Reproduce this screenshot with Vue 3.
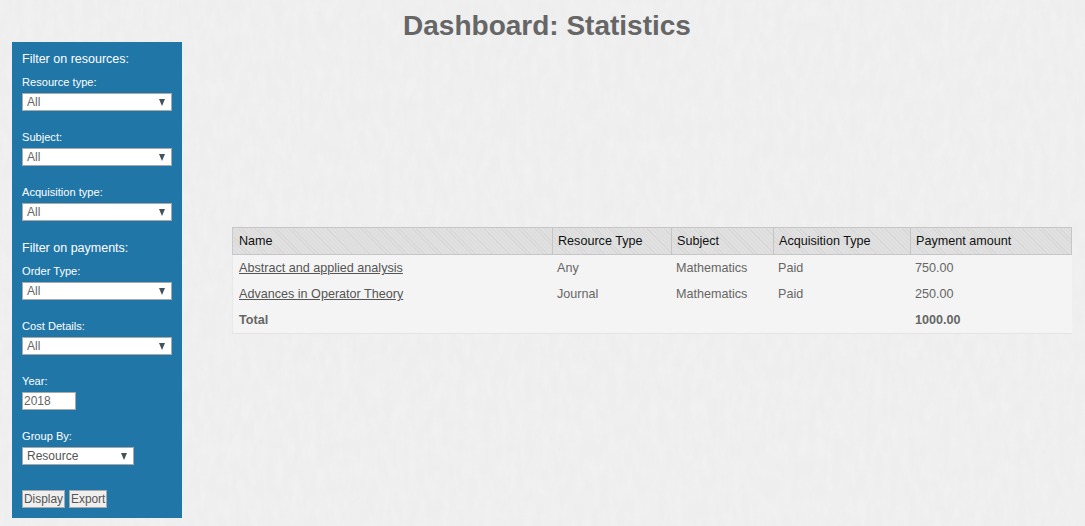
<script setup>
const resourceFilters = [
  { label: 'Resource type:', value: 'All' },
  { label: 'Subject:', value: 'All' },
  { label: 'Acquisition type:', value: 'All' },
]
const paymentFilters = [
  { label: 'Order Type:', value: 'All' },
  { label: 'Cost Details:', value: 'All' },
]
const columns = ['Name', 'Resource Type', 'Subject', 'Acquisition Type', 'Payment amount']
const rows = [
  { name: 'Abstract and applied analysis', type: 'Any', subject: 'Mathematics', acq: 'Paid', amount: '750.00' },
  { name: 'Advances in Operator Theory', type: 'Journal', subject: 'Mathematics', acq: 'Paid', amount: '250.00' },
]
</script>

<template>
  <div class="page">
    <svg class="texture" width="1085" height="526" aria-hidden="true">
      <filter id="paper" x="0" y="0" width="100%" height="100%">
        <feTurbulence type="fractalNoise" baseFrequency="0.12 0.05" numOctaves="4" seed="4" />
        <feColorMatrix type="matrix" values="0 0 0 0 1  0 0 0 0 1  0 0 0 0 1  0.9 0 0 0 -0.3" />
      </filter>
      <rect width="1085" height="526" filter="url(#paper)" opacity="0.4" />
    </svg>
    <h1 class="title">Dashboard: Statistics</h1>
    <div class="content">
      <aside class="sidebar">
        <h2 class="group-title">Filter on resources:</h2>
        <div v-for="f in resourceFilters" :key="f.label" class="field">
          <label>{{ f.label }}</label>
          <div class="select wide"><span>{{ f.value }}</span></div>
        </div>
        <h2 class="group-title">Filter on payments:</h2>
        <div v-for="f in paymentFilters" :key="f.label" class="field">
          <label>{{ f.label }}</label>
          <div class="select wide"><span>{{ f.value }}</span></div>
        </div>
        <div class="field">
          <label>Year:</label>
          <input class="year" value="2018" />
        </div>
        <div class="field">
          <label>Group By:</label>
          <div class="select group"><span>Resource</span></div>
        </div>
        <div class="buttons">
          <button>Display</button>
          <button>Export</button>
        </div>
      </aside>
      <main class="main">
        <table class="stats">
          <colgroup>
            <col style="width: 320px" />
            <col style="width: 119px" />
            <col style="width: 102px" />
            <col style="width: 137px" />
            <col style="width: 161px" />
          </colgroup>
          <thead>
            <tr><th v-for="c in columns" :key="c">{{ c }}</th></tr>
          </thead>
          <tbody>
            <tr v-for="r in rows" :key="r.name">
              <td class="name"><a href="#" @click.prevent>{{ r.name }}</a></td>
              <td>{{ r.type }}</td>
              <td>{{ r.subject }}</td>
              <td>{{ r.acq }}</td>
              <td>{{ r.amount }}</td>
            </tr>
            <tr class="total">
              <td class="name">Total</td>
              <td></td>
              <td></td>
              <td></td>
              <td>1000.00</td>
            </tr>
          </tbody>
        </table>
      </main>
    </div>
  </div>
</template>

<style>
html, body { margin: 0; background: #f0f0f0; }
</style>

<style scoped>
.page {
  position: relative;
  width: 1085px;
  height: 526px;
  overflow: hidden;
  background: #eeeeee;
  font-family: "Liberation Sans", Arial, sans-serif;
  color: #666;
}
.texture { position: absolute; left: 0; top: 0; }
.title {
  position: relative;
  margin: 0;
  height: 42px;
  padding-left: 9px;
  text-align: center;
  font-size: 28px;
  line-height: 51px;
  font-weight: bold;
  color: #666;
  box-sizing: border-box;
}
.content {
  position: relative;
  display: flex;
  align-items: flex-start;
  padding-left: 12px;
}
.sidebar {
  box-sizing: border-box;
  width: 170px;
  height: 476px;
  padding: 8px 10px 0;
  background: #2176a8;
  color: #fff;
}
.group-title {
  margin: 0 0 6px;
  font-size: 12.5px;
  line-height: 18px;
  font-weight: normal;
}
.field { margin-bottom: 18px; }
.field label {
  display: block;
  font-size: 11.1px;
  line-height: 15px;
  height: 19px;
  padding-top: 1px;
  box-sizing: border-box;
}
.select {
  position: relative;
  box-sizing: border-box;
  height: 18px;
  background: #fff;
  border: 1px solid #a9a9a9;
  color: #666;
  font-size: 12px;
  line-height: 16px;
  padding-left: 4px;
}
.select.wide { width: 150px; }
.select.group { width: 112px; padding-left: 4px; color: #555; }
.select::after {
  content: "";
  position: absolute;
  right: 6px;
  top: 5px;
  border-left: 3.5px solid transparent;
  border-right: 3.5px solid transparent;
  border-top: 7px solid #44525a;
}
.year {
  display: block;
  box-sizing: border-box;
  width: 54px;
  height: 18px;
  padding: 0 1px;
  border: 1px solid #a9a9a9;
  background: #fff;
  color: #666;
  font: 12px/16px "Liberation Sans", Arial, sans-serif;
  outline: none;
}
.buttons { display: flex; gap: 4px; margin-top: 25px; }
.buttons button {
  box-sizing: border-box;
  height: 18px;
  padding: 0 1px;
  border: 1px solid #a9a9a9;
  background: #efefef;
  color: #555;
  font: 11.9px/16px "Liberation Sans", Arial, sans-serif;
}
.main { padding: 185px 0 0 50px; }
.stats {
  table-layout: fixed;
  width: 839px;
  border-collapse: collapse;
  background: #f4f4f4;
  font-size: 12.6px;
  border: 0;
}
.stats th {
  height: 26px;
  padding: 0 0 0 5px;
  text-align: left;
  font-weight: normal;
  color: #111;
  border: 1px solid #c6c6c6;
  border-left-color: #c9c9c9;
  background: #dcdcdc repeating-linear-gradient(45deg, #d6d6d6 0, #d6d6d6 1px, #e2e2e2 1px, #e2e2e2 3px);
}
.stats th:first-child { padding-left: 6px; }
.stats td {
  height: 26px;
  padding: 0 0 0 4.5px;
  color: #666;
}
.stats td.name { padding-left: 6px; }
.stats tbody tr:last-child td { border-bottom: 1px solid #e4e4e4; }
.stats tbody td:first-child { border-left: 1px solid #e8e8e8; }
.stats a { color: #555; text-decoration: underline; }
.total td { font-weight: bold; }
</style>
